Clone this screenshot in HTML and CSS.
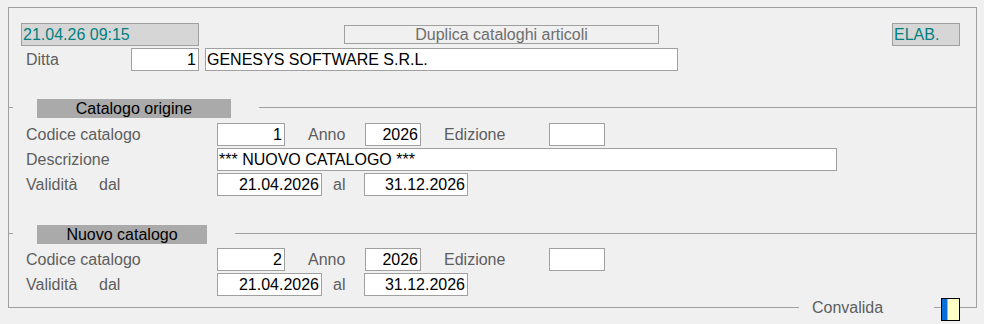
FILE: index.html
```html
<!DOCTYPE html>
<html lang="it">
<head>
<meta charset="utf-8">
<title>Duplica cataloghi articoli</title>
<link rel="stylesheet" href="styles.css">
</head>
<body>
<div class="frame">
  <div class="hdr">
    <div class="stamp date">21.04.26 09:15</div>
    <div class="title">Duplica cataloghi articoli</div>
    <div class="stamp elab">ELAB.</div>
  </div>

  <div class="row r-ditta">
    <span class="lbl l-ditta">Ditta</span>
    <span class="fld num w-ditta">1</span>
    <span class="fld w-name">GENESYS SOFTWARE S.R.L.</span>
  </div>

  <div class="sep sep-1">
    <span class="tick"></span>
    <span class="sec sec-w1">Catalogo origine</span>
    <span class="rule"></span>
  </div>

  <div class="row r-first">
    <span class="lbl l-main">Codice catalogo</span>
    <span class="fld num w-cod">1</span>
    <span class="lbl l-anno">Anno</span>
    <span class="fld num w-anno">2026</span>
    <span class="lbl l-ediz">Edizione</span>
    <span class="fld w-ediz"></span>
  </div>
  <div class="row r-next">
    <span class="lbl l-main">Descrizione</span>
    <span class="fld w-desc">*** NUOVO CATALOGO ***</span>
  </div>
  <div class="row r-next">
    <span class="lbl l-main"><span class="l-val">Validità</span>dal</span>
    <span class="fld num w-dal">21.04.2026</span>
    <span class="lbl l-al">al</span>
    <span class="fld num w-al">31.12.2026</span>
  </div>

  <div class="sep sep-2">
    <span class="tick"></span>
    <span class="sec sec-w2">Nuovo catalogo</span>
    <span class="rule"></span>
  </div>

  <div class="row r-first2">
    <span class="lbl l-main">Codice catalogo</span>
    <span class="fld num w-cod">2</span>
    <span class="lbl l-anno">Anno</span>
    <span class="fld num w-anno">2026</span>
    <span class="lbl l-ediz">Edizione</span>
    <span class="fld w-ediz"></span>
  </div>
  <div class="row r-next">
    <span class="lbl l-main"><span class="l-val">Validità</span>dal</span>
    <span class="fld num w-dal">21.04.2026</span>
    <span class="lbl l-al">al</span>
    <span class="fld num w-al">31.12.2026</span>
  </div>
</div>

<div class="foot">
  <span class="foot-line"></span>
  <span class="foot-text">Convalida</span>
  <span class="foot-seg"></span>
  <span class="check"></span>
  <span class="foot-rest"></span>
</div>
</body>
</html>
```

FILE: styles.css
```css
* { box-sizing: border-box; }

html, body {
  margin: 0;
  padding: 0;
  background: #f0f0f0;
}

body {
  font-family: "Liberation Sans", Arial, sans-serif;
  font-size: 16px;
  color: #000;
}

.frame {
  margin: 7px 0 0 8px;
  width: 969px;
  height: 291px;
  border: 1px solid #a0a0a0;
  border-bottom: none;
  display: flex;
  flex-direction: column;
}

/* header */
.hdr {
  display: flex;
  align-items: center;
  margin-top: 15px;
  height: 23px;
}
.stamp {
  height: 23px;
  line-height: 21px;
  background: #d6d6d6;
  border: 1px solid #a0a0a0;
  color: #008080;
  padding-left: 1px;
  white-space: nowrap;
}
.date { margin-left: 12px; width: 178px; }
.title {
  margin-left: 145px;
  width: 315px;
  height: 19px;
  line-height: 17px;
  border: 1px solid #a0a0a0;
  color: #6e6e6e;
  text-align: center;
}
.elab { margin-left: 233px; width: 68px; }

/* rows */
.row {
  display: flex;
  align-items: center;
  flex: none;
  height: 23px;
  padding-left: 17px;
}
.r-ditta { margin-top: 2px; }
.r-first { margin-top: 5px; }
.r-first2 { margin-top: 4px; }
.r-next { margin-top: 2px; }

.lbl {
  color: #5e5e5e;
  line-height: 23px;
  white-space: nowrap;
}
.l-ditta { width: 105px; }
.l-main { width: 191px; display: flex; }
.l-val { width: 73px; }
.l-anno { width: 80px; padding-left: 23px; }
.l-ediz { width: 128px; padding-left: 23px; }
.l-al { width: 42px; padding-left: 11px; }

.fld {
  height: 23px;
  line-height: 21px;
  background: #fff;
  border: 1px solid #a0a0a0;
  padding: 0 2px 0 1px;
  white-space: nowrap;
  overflow: hidden;
}
.num { text-align: right; }
.w-ditta { width: 68px; }
.w-name { width: 473px; margin-left: 6px; }
.w-cod { width: 68px; }
.w-anno { width: 56px; }
.w-ediz { width: 56px; }
.w-desc { width: 620px; }
.w-dal { width: 105px; }
.w-al { width: 104px; }

/* section separators */
.sep {
  display: flex;
  align-items: flex-start;
  flex: none;
  height: 19px;
}
.sep-1 { margin-top: 28px; }
.sep-2 { margin-top: 29px; }
.tick {
  width: 4px;
  margin-top: 8px;
  border-top: 1px solid #a0a0a0;
}
.sec {
  margin-left: 24px;
  height: 19px;
  line-height: 19px;
  background: #aaaaaa;
  text-align: center;
  color: #000;
}
.sec-w1 { width: 194px; }
.sec-w2 { width: 170px; }
.rule {
  flex: 1;
  margin-left: 28px;
  margin-top: 8px;
  border-top: 1px solid #a0a0a0;
}

/* footer: bottom edge of the frame with Convalida */
.foot {
  margin-left: 8px;
  width: 969px;
  height: 23px;
  display: flex;
  align-items: flex-start;
}
.foot-line {
  width: 791px;
  height: 10px;
  border-left: 1px solid #a0a0a0;
  border-bottom: 1px solid #a0a0a0;
}
.foot-text {
  width: 135px;
  padding-left: 13px;
  margin-top: 1px;
  line-height: 18px;
  color: #5e5e5e;
}
.foot-seg {
  width: 7px;
  height: 10px;
  border-bottom: 1px solid #a0a0a0;
}
.check {
  width: 19px;
  height: 23px;
  border: 1px solid #000;
  background: linear-gradient(to right, #0a6fd6 0, #0a6fd6 5px, #e8a040 5px, #e8a040 6px, #ffffc6 6px);
}
.foot-rest {
  flex: 1;
  height: 10px;
  border-right: 1px solid #a0a0a0;
  border-bottom: 1px solid #a0a0a0;
}
```
